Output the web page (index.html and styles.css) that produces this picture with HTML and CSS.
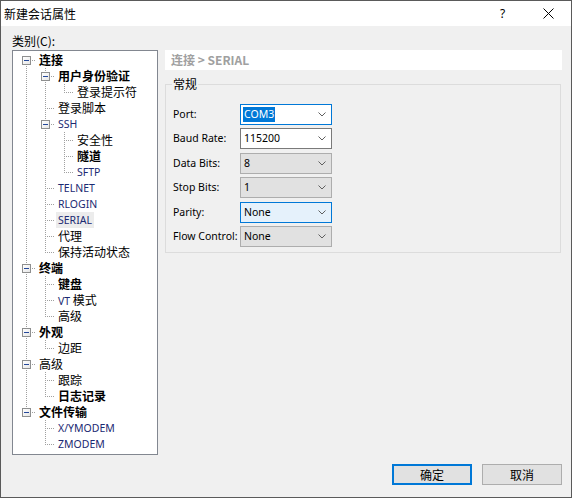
FILE: index.html
```html
<!DOCTYPE html>
<html lang="zh-CN">
<head>
<meta charset="utf-8">
<title>新建会话属性</title>
<link rel="stylesheet" href="styles.css">
</head>
<body>
<div class="window">
  <div class="titlebar">
    <span class="title">新建会话属性</span>
    <span class="tb-help">?</span>
    <span class="tb-close"><svg width="11" height="11" viewBox="0 0 11 11"><path d="M0.5 0.5L10.5 10.5M10.5 0.5L0.5 10.5" stroke="#000" stroke-width="1"/></svg></span>
  </div>
  <div class="client">
    <div class="main">
      <div class="leftcol">
        <div class="cat-label">类别(C):</div>
        <div class="tree">
          <div class="row"><span class="cell first"><span class="exp"><i></i></span></span><span class="txt b">连接</span></div>
          <div class="row"><span class="cell pipe"></span><span class="cell tee"><span class="exp"><i></i></span></span><span class="txt b">用户身份验证</span></div>
          <div class="row"><span class="cell pipe"></span><span class="cell pipe"></span><span class="cell ell"></span><span class="txt">登录提示符</span></div>
          <div class="row"><span class="cell pipe"></span><span class="cell tee"></span><span class="txt">登录脚本</span></div>
          <div class="row"><span class="cell pipe"></span><span class="cell tee"><span class="exp"><i></i></span></span><span class="txt lat">SSH</span></div>
          <div class="row"><span class="cell pipe"></span><span class="cell pipe"></span><span class="cell tee"></span><span class="txt">安全性</span></div>
          <div class="row"><span class="cell pipe"></span><span class="cell pipe"></span><span class="cell tee"></span><span class="txt b">隧道</span></div>
          <div class="row"><span class="cell pipe"></span><span class="cell pipe"></span><span class="cell ell"></span><span class="txt lat">SFTP</span></div>
          <div class="row"><span class="cell pipe"></span><span class="cell tee"></span><span class="txt lat">TELNET</span></div>
          <div class="row"><span class="cell pipe"></span><span class="cell tee"></span><span class="txt lat">RLOGIN</span></div>
          <div class="row"><span class="cell pipe"></span><span class="cell tee"></span><span class="txt lat sel">SERIAL</span></div>
          <div class="row"><span class="cell pipe"></span><span class="cell tee"></span><span class="txt">代理</span></div>
          <div class="row"><span class="cell pipe"></span><span class="cell ell"></span><span class="txt">保持活动状态</span></div>
          <div class="row"><span class="cell tee"><span class="exp"><i></i></span></span><span class="txt b">终端</span></div>
          <div class="row"><span class="cell pipe"></span><span class="cell tee"></span><span class="txt b">键盘</span></div>
          <div class="row"><span class="cell pipe"></span><span class="cell tee"></span><span class="txt"><span class="latc">VT</span> 模式</span></div>
          <div class="row"><span class="cell pipe"></span><span class="cell ell"></span><span class="txt">高级</span></div>
          <div class="row"><span class="cell tee"><span class="exp"><i></i></span></span><span class="txt b">外观</span></div>
          <div class="row"><span class="cell pipe"></span><span class="cell ell"></span><span class="txt">边距</span></div>
          <div class="row"><span class="cell tee"><span class="exp"><i></i></span></span><span class="txt">高级</span></div>
          <div class="row"><span class="cell pipe"></span><span class="cell tee"></span><span class="txt">跟踪</span></div>
          <div class="row"><span class="cell pipe"></span><span class="cell ell"></span><span class="txt b">日志记录</span></div>
          <div class="row"><span class="cell ell"><span class="exp"><i></i></span></span><span class="txt b">文件传输</span></div>
          <div class="row"><span class="cell"></span><span class="cell tee"></span><span class="txt lat">X/YMODEM</span></div>
          <div class="row"><span class="cell"></span><span class="cell ell"></span><span class="txt lat">ZMODEM</span></div>
        </div>
      </div>
      <div class="rightcol">
        <div class="crumb">连接 &gt; SERIAL</div>
        <div class="group">
          <div class="legend">常规</div>
          <div class="form">
            <div class="lbl">Port:</div>
            <div class="combo focus"><span class="val"><span class="hl">COM3</span></span><svg class="chev" width="8" height="5" viewBox="0 0 8 5"><path d="M0.5 0.5L4 4L7.5 0.5" fill="none" stroke="#5f5f5f" stroke-width="1"/></svg></div>
            <div class="lbl">Baud Rate:</div>
            <div class="combo edit"><span class="val">115200</span><svg class="chev" width="8" height="5" viewBox="0 0 8 5"><path d="M0.5 0.5L4 4L7.5 0.5" fill="none" stroke="#5f5f5f" stroke-width="1"/></svg></div>
            <div class="lbl">Data Bits:</div>
            <div class="combo"><span class="val">8</span><svg class="chev" width="8" height="5" viewBox="0 0 8 5"><path d="M0.5 0.5L4 4L7.5 0.5" fill="none" stroke="#5f5f5f" stroke-width="1"/></svg></div>
            <div class="lbl">Stop Bits:</div>
            <div class="combo"><span class="val">1</span><svg class="chev" width="8" height="5" viewBox="0 0 8 5"><path d="M0.5 0.5L4 4L7.5 0.5" fill="none" stroke="#5f5f5f" stroke-width="1"/></svg></div>
            <div class="lbl">Parity:</div>
            <div class="combo hover"><span class="val">None</span><svg class="chev" width="8" height="5" viewBox="0 0 8 5"><path d="M0.5 0.5L4 4L7.5 0.5" fill="none" stroke="#5f5f5f" stroke-width="1"/></svg></div>
            <div class="lbl">Flow Control:</div>
            <div class="combo"><span class="val">None</span><svg class="chev" width="8" height="5" viewBox="0 0 8 5"><path d="M0.5 0.5L4 4L7.5 0.5" fill="none" stroke="#5f5f5f" stroke-width="1"/></svg></div>
          </div>
        </div>
      </div>
    </div>
    <div class="buttons">
      <button class="btn default">确定</button>
      <button class="btn">取消</button>
    </div>
  </div>
</div>
</body>
</html>
```
FILE: styles.css
```css
:root {
  --dv: repeating-linear-gradient(180deg, #a0a0a0 0 1px, transparent 1px 2px);
  --dh: repeating-linear-gradient(90deg, #a0a0a0 0 1px, transparent 1px 2px);
}
* { box-sizing: border-box; }
html, body { margin: 0; padding: 0; }
body {
  font-family: "Noto Sans CJK SC", "Noto Sans", sans-serif;
  font-size: 12px;
  color: #000;
  background: #f0f0f0;
}
.window {
  width: 572px;
  height: 498px;
  border: 1px solid #5a5a5a;
  background: #f0f0f0;
  display: flex;
  flex-direction: column;
}
.titlebar {
  height: 25px;
  background: #fff;
  display: flex;
  align-items: center;
  padding-left: 3px;
}
.title { flex: 1; line-height: 16px; }
.tb-help { width: 10px; margin-right: 33px; line-height: 16px; font-family: "Noto Sans", sans-serif; font-size: 12px; }
.tb-close { width: 11px; height: 11px; margin-right: 17px; display: flex; }
.tb-close svg { display: block; }
.client {
  flex: 1;
  display: flex;
  flex-direction: column;
  padding: 0 9px 0 11px;
}
.main { display: flex; }
.leftcol { width: 146px; }
.cat-label { margin-top: 7px; line-height: 16px; height: 16px; }
.tree {
  margin-top: 1px;
  height: 405px;
  background: #fff;
  border: 1px solid #828790;
  padding: 1px 0 0 3px;
}
.row { display: flex; height: 16px; align-items: center; }
.cell { width: 19px; height: 16px; flex: none; display: flex; align-items: center; }
.pipe { background: var(--dv) 10px 0 / 1px 16px no-repeat; }
.tee { background: var(--dv) 10px 0 / 1px 16px no-repeat, var(--dh) 12px 8px / 7px 1px no-repeat; }
.ell { background: var(--dv) 10px 0 / 1px 9px no-repeat, var(--dh) 12px 8px / 7px 1px no-repeat; }
.first { background: var(--dv) 10px 8px / 1px 8px no-repeat, var(--dh) 12px 8px / 7px 1px no-repeat; }
.exp {
  width: 9px; height: 9px;
  margin-left: 6px;
  border: 1px solid #8e8f8f;
  background: linear-gradient(135deg, #ffffff 0%, #e6e6e6 100%);
  display: flex; align-items: center; justify-content: center;
}
.exp i { display: block; width: 5px; height: 1px; background: #24489a; }
.txt { line-height: 16px; height: 16px; padding: 0 2px; margin-left: 2px; white-space: nowrap; }
.b { font-weight: bold; }
.lat, .latc { color: #1b2a72; font-family: "Noto Sans", sans-serif; font-size: 10.5px; }
.sel { background: #ececec; }
.rightcol { margin-left: 7px; width: 397px; padding-top: 24px; }
.crumb {
  height: 20px;
  background: #fff;
  color: #a0a0a0;
  font-weight: bold;
  line-height: 20px;
  padding-left: 6px;
}
.group {
  margin-top: 14px;
  width: 396px;
  border: 1px solid #dcdcdc;
  padding: 0 0 5px 7px;
}
.legend {
  width: fit-content;
  margin-top: -9px;
  margin-left: -1px;
  padding: 0 1px;
  background: #f0f0f0;
  line-height: 16px;
}
.form {
  margin-top: 12px;
  display: grid;
  grid-template-columns: 67px 92px;
  row-gap: 3.4px;
  font-family: "Noto Sans", sans-serif;
  font-size: 10.5px;
}
.lbl { line-height: 21px; height: 21px; white-space: nowrap; }
.combo {
  height: 21px;
  border: 1px solid #adadad;
  background: #e1e1e1;
  display: flex;
  align-items: center;
  padding: 0 5px 0 3px;
}
.combo.edit { background: #fff; border-color: #7a7a7a; }
.combo.focus { background: #fff; border-color: #0078d7; }
.combo.hover { background: #e5f1fb; border-color: #0078d7; }
.val { flex: 1; line-height: 15px; }
.hl { background: #0078d7; color: #fff; padding: 0 1px; margin-left: -1px; display: inline-block; }
.chev { display: block; }
.buttons {
  margin-top: 9px;
  display: flex;
  justify-content: flex-end;
  gap: 10px;
}
.btn {
  width: 80px;
  height: 21px;
  border: 1px solid #adadad;
  background: #e1e1e1;
  font-family: "Noto Sans CJK SC", sans-serif;
  font-size: 12px;
  color: #000;
  padding: 0;
  margin: 0;
  line-height: 16px;
  border-radius: 0;
}
.btn.default { border: 2px solid #0078d7; }
```
